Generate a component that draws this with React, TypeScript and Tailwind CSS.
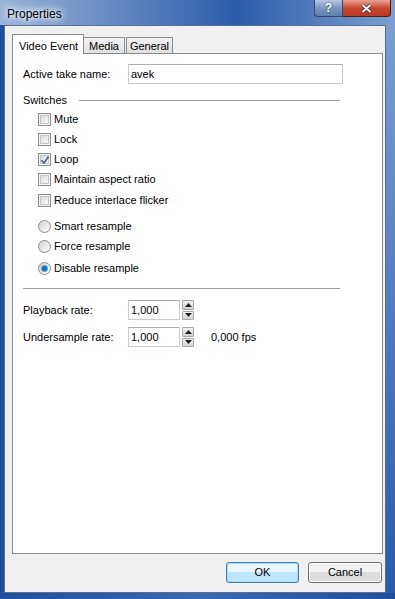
import React from "react";

const FONT = "font-['Liberation_Sans',Arial,sans-serif]";

function Checkbox({ checked = false }: { checked?: boolean }) {
  return (
    <span className="relative flex h-[13px] w-[13px] shrink-0 items-center justify-center border border-[#8e8f8f] bg-[#f4f4f4]">
      <span className="h-[9px] w-[9px] border border-[#c5c5c5] bg-linear-to-br from-[#dcdcdc] to-[#f8f8f8]" />
      {checked && (
        <svg className="absolute left-[1px] top-[1px] h-[10px] w-[10px]" viewBox="0 0 10 10" aria-hidden="true">
          <path d="M1.5 5.2 L4 8 L8.6 1.6" fill="none" stroke="#4a5f97" strokeWidth="1.7" />
        </svg>
      )}
    </span>
  );
}

function Radio({ checked = false }: { checked?: boolean }) {
  return (
    <span className="flex h-[13px] w-[13px] shrink-0 items-center justify-center rounded-full border border-[#8e8f8f] bg-linear-to-br from-[#d4d4d4] to-[#fbfbfb]">
      {checked && (
        <span className="h-[5px] w-[5px] rounded-full bg-[#1a6fb5] shadow-[0_0_0_1px_#5ba6dc]" />
      )}
    </span>
  );
}

function Spinner() {
  return (
    <span className="ml-[2px] flex h-[20px] w-[12px] flex-col gap-[1px]">
      {[0, 1].map((i) => (
        <span
          key={i}
          className="flex flex-1 items-center justify-center rounded-[1px] border border-[#a7a7a7] bg-linear-to-b from-[#f2f2f2] to-[#d5d5d5]"
        >
          <svg className="h-[4px] w-[7px]" viewBox="0 0 7 4" aria-hidden="true">
            <path d={i === 0 ? "M0 4 L3.5 0 L7 4 Z" : "M0 0 L3.5 4 L7 0 Z"} fill="#202020" />
          </svg>
        </span>
      ))}
    </span>
  );
}

const checks = [
  { label: "Mute", on: false },
  { label: "Lock", on: false },
  { label: "Loop", on: true },
  { label: "Maintain aspect ratio", on: false },
  { label: "Reduce interlace flicker", on: false },
];

export default function App() {
  return (
    <div className={`flex h-[599px] w-[395px] flex-col overflow-hidden bg-[#2f62ae] text-[11px] text-black ${FONT}`}>
      {/* title bar */}
      <div className="relative flex h-[25px] shrink-0 items-start bg-linear-to-r from-[#9ab4d9] via-[#2a5ca9] via-60% to-[#7d9fcf]">
        <span className="ml-[7px] mt-[5px] text-[12px] [text-shadow:0_0_5px_#fff,0_0_8px_#fff,0_0_12px_#fff]">
          Properties
        </span>
        <div className="absolute right-[4px] top-0 flex h-[17px]">
          <span className="flex w-[29px] items-center justify-center rounded-bl-[4px] border border-t-0 border-[#33486b] bg-linear-to-b from-[#b7c8e2] via-[#7b96c0] to-[#5f7eae] text-[12px] font-bold text-white [text-shadow:0_0_2px_#233]">
            ?
          </span>
          <span className="flex w-[48px] items-center justify-center rounded-br-[4px] border border-l-0 border-t-0 border-[#4b1c1a] bg-linear-to-b from-[#e8a393] via-[#c8452f] to-[#b83a22]">
            <svg className="h-[9px] w-[11px]" viewBox="0 0 11 9" aria-hidden="true">
              <path d="M1.5 1 L9.5 8 M9.5 1 L1.5 8" stroke="#2b2b2b" strokeWidth="3.2" />
              <path d="M1.5 1 L9.5 8 M9.5 1 L1.5 8" stroke="#fff" strokeWidth="1.8" />
            </svg>
          </span>
        </div>
      </div>

      {/* body */}
      <div className="flex flex-1">
        <div className="w-[4px] shrink-0 bg-[#1f4f9c]" />
        <div className="flex flex-1 flex-col border border-[#5a6f90] bg-[#f0f0f0] pl-[7px] pr-[2px] pt-[8px]">
          {/* tabs */}
          <div className="relative z-10 flex h-[19px] items-end">
            <span className="-mb-[1px] flex h-[20px] w-[72px] items-start border border-b-0 border-[#898c95] bg-white pl-[6px] pt-[3px]">
              Video Event
            </span>
            <span className="flex h-[16px] w-[41px] items-center justify-center border border-l-0 border-b-0 border-[#898c95] bg-linear-to-b from-[#f2f2f2] to-[#e1e1e1] pt-[1px]">
              Media
            </span>
            <span className="ml-[1px] flex h-[16px] w-[47px] items-center justify-center border border-b-0 border-[#898c95] bg-linear-to-b from-[#f2f2f2] to-[#e1e1e1] pt-[1px]">
              General
            </span>
          </div>

          {/* panel */}
          <div className="flex h-[501px] flex-col border border-[#898c95] bg-white pl-[10px] pr-[42px]">
            <div className="mt-[10px] flex h-[20px] items-center">
              <span className="w-[105px]">Active take name:</span>
              <span className="-mr-[3px] flex h-[20px] flex-1 items-center border border-[#c9cbce] border-t-[#abadb3] pl-[2px]">
                avek
              </span>
            </div>

            <div className="mt-[9px] flex h-[14px] items-center">
              <span>Switches</span>
              <span className="ml-[12px] h-px flex-1 bg-[#a0a0a0]" />
            </div>

            <div className="mt-[2px] flex flex-col pl-[15px]">
              {checks.map((c, i) => (
                <div key={c.label} className={`flex h-[20px] items-center gap-[3px] ${i === 4 ? "mt-[1px]" : ""}`}>
                  <Checkbox checked={c.on} />
                  <span>{c.label}</span>
                </div>
              ))}
            </div>

            <div className="mt-[6px] flex flex-col pl-[15px]">
              <div className="flex h-[20px] items-center gap-[3px]">
                <Radio />
                <span>Smart resample</span>
              </div>
              <div className="flex h-[20px] items-center gap-[3px]">
                <Radio />
                <span>Force resample</span>
              </div>
              <div className="mt-[2px] flex h-[20px] items-center gap-[3px]">
                <Radio checked />
                <span>Disable resample</span>
              </div>
            </div>

            <div className="mt-[10px] h-px bg-[#a0a0a0]" />

            <div className="mt-[11px] flex h-[20px] items-center">
              <span className="w-[105px]">Playback rate:</span>
              <span className="flex h-[20px] w-[52px] items-center border border-[#c9cbce] border-t-[#abadb3] pl-[2px]">1,000</span>
              <Spinner />
            </div>
            <div className="mt-[7px] flex h-[20px] items-center">
              <span className="w-[105px]">Undersample rate:</span>
              <span className="flex h-[20px] w-[52px] items-center border border-[#c9cbce] border-t-[#abadb3] pl-[2px]">1,000</span>
              <Spinner />
              <span className="ml-[17px]">0,000 fps</span>
            </div>
          </div>

          {/* buttons */}
          <div className="mt-[8px] flex justify-end gap-[9px] pr-[1px]">
            <button className="h-[21px] w-[73px] rounded-[3px] border border-[#3c7fb1] bg-linear-to-b from-[#eaf6fd] from-50% to-[#bee6fd] to-50% shadow-[inset_0_0_0_1px_#a9dbf6]">
              OK
            </button>
            <button className="h-[21px] w-[74px] rounded-[3px] border border-[#707070] bg-linear-to-b from-[#f2f2f2] from-50% to-[#dddddd] to-50% shadow-[inset_0_0_0_1px_#fcfcfc]">
              Cancel
            </button>
          </div>
        </div>
        <div className="w-[9px] shrink-0 bg-linear-to-b from-[#7c9ed0] to-[#2a5aa8]" />
      </div>
      <div className="h-[6px] shrink-0 bg-linear-to-r from-[#1f4f9c] via-[#3a6ab4] to-[#1f4f9c]" />
    </div>
  );
}
